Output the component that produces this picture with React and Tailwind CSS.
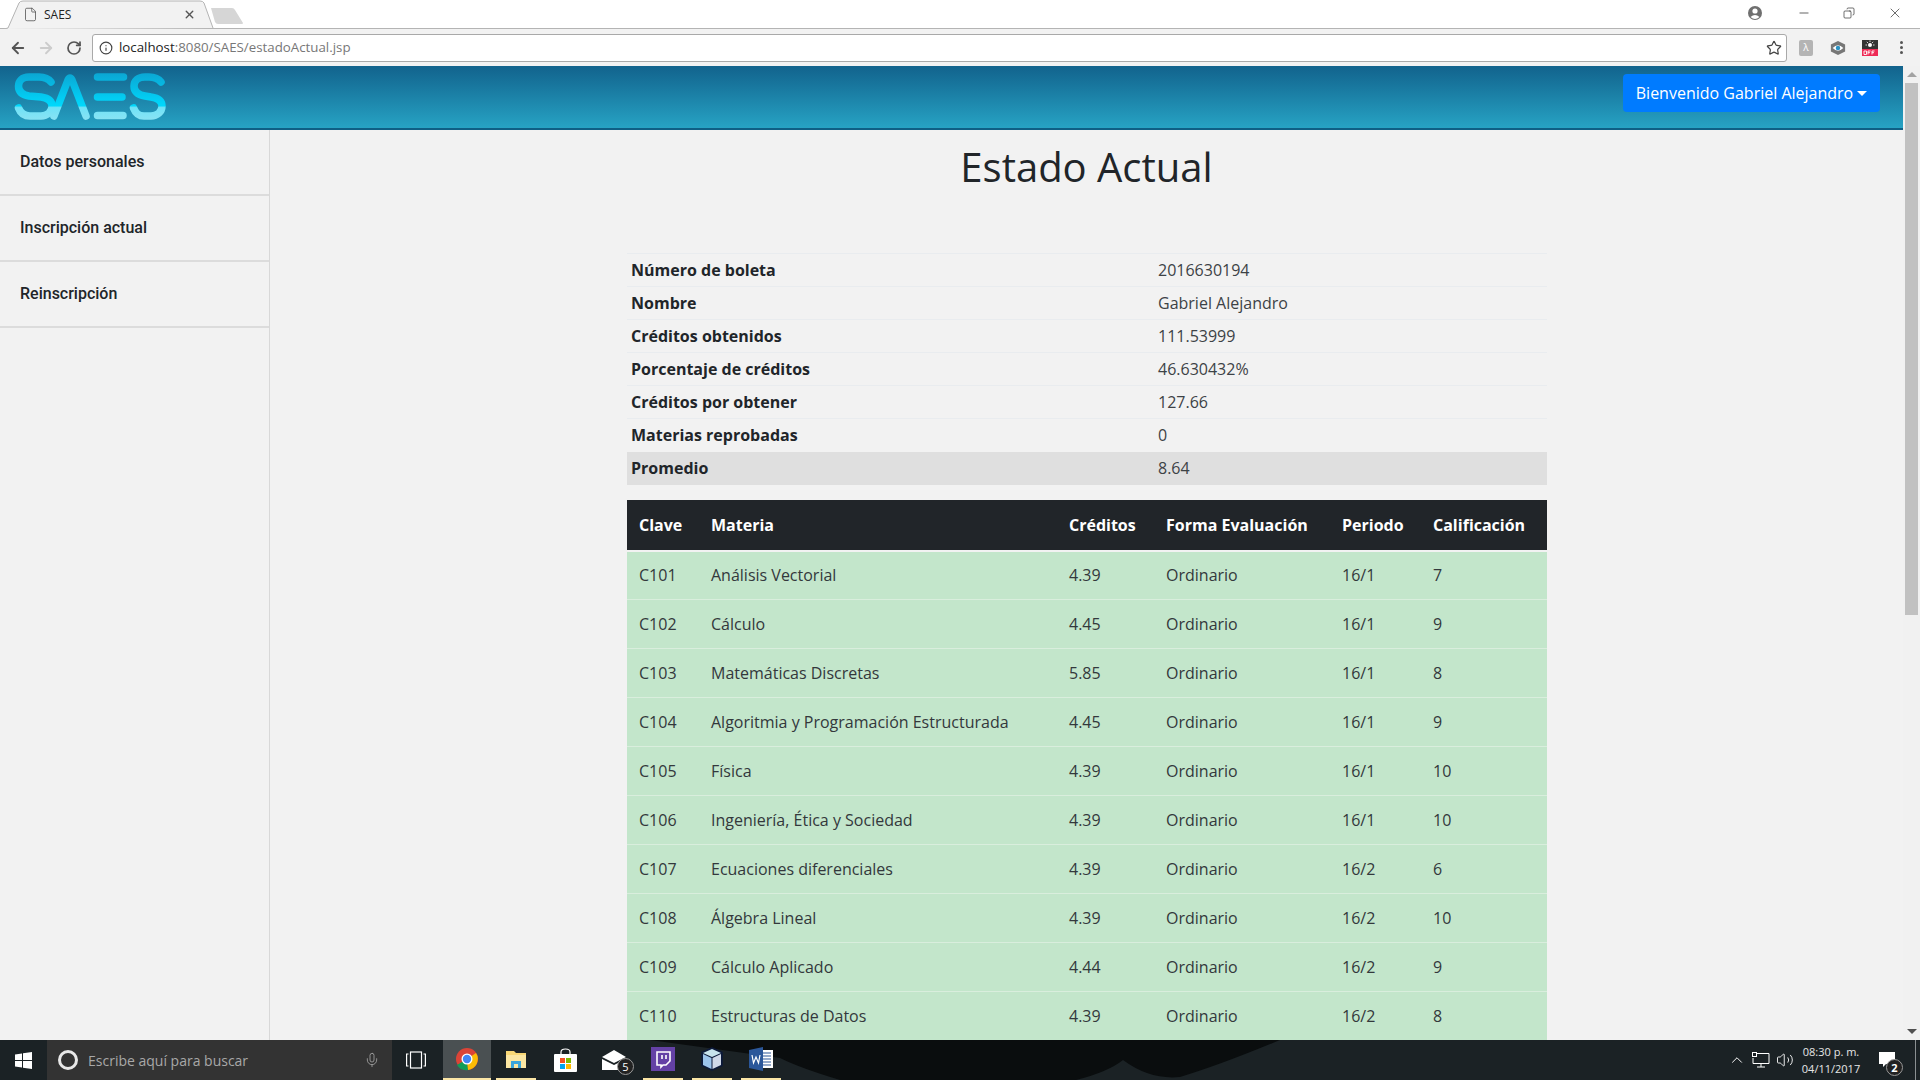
import { ArrowLeft, ArrowRight, RotateCw, Info, Star, X, Minus, Mic, ChevronUp, File, Copy, Volume2 } from 'lucide-react'

const info = [
  ['Número de boleta', '2016630194'],
  ['Nombre', 'Gabriel Alejandro'],
  ['Créditos obtenidos', '111.53999'],
  ['Porcentaje de créditos', '46.630432%'],
  ['Créditos por obtener', '127.66'],
  ['Materias reprobadas', '0'],
  ['Promedio', '8.64'],
]

const materias = [
  ['C101', 'Análisis Vectorial', '4.39', 'Ordinario', '16/1', '7'],
  ['C102', 'Cálculo', '4.45', 'Ordinario', '16/1', '9'],
  ['C103', 'Matemáticas Discretas', '5.85', 'Ordinario', '16/1', '8'],
  ['C104', 'Algoritmia y Programación Estructurada', '4.45', 'Ordinario', '16/1', '9'],
  ['C105', 'Física', '4.39', 'Ordinario', '16/1', '10'],
  ['C106', 'Ingeniería, Ética y Sociedad', '4.39', 'Ordinario', '16/1', '10'],
  ['C107', 'Ecuaciones diferenciales', '4.39', 'Ordinario', '16/2', '6'],
  ['C108', 'Álgebra Lineal', '4.39', 'Ordinario', '16/2', '10'],
  ['C109', 'Cálculo Aplicado', '4.44', 'Ordinario', '16/2', '9'],
  ['C110', 'Estructuras de Datos', '4.39', 'Ordinario', '16/2', '8'],
]

function Logo() {
  return (
    <svg width="170" height="52" viewBox="0 0 170 52" fill="none" strokeLinecap="round" strokeLinejoin="round">
      <defs>
        <linearGradient id="saes" gradientUnits="userSpaceOnUse" x1="0" y1="2" x2="0" y2="50">
          <stop offset="0" stopColor="#0ba6d3" />
          <stop offset="0.68" stopColor="#00d8fc" />
          <stop offset="0.72" stopColor="#6fe2f7" />
          <stop offset="1" stopColor="#8ce3f3" />
        </linearGradient>
      </defs>
      <g stroke="url(#saes)" strokeWidth="7.5">
        <path d="M51 11 C48 7 44 6 39 6 H29 C22 6 18.5 10 18.5 15 C18.5 21 23 24 29 25 L41 26 C48 27 52 30 52 35 C52 41 47 45 41 45 H30 C24 45 20.5 42 18.5 37" />
        <path d="M54 45 L68 9 Q70 5 72 9 L86 45" />
        <path d="M97.5 6 H123.5 M97.5 26 H122 M97.5 44.5 H123" />
        <path d="M161 11 C158 7 154 6 149 6 H145 C138 6 134 10 134 15 C134 21 139 24 145 25 L151 26 C158 27 162 30 162 35 C162 41 157 45 151 45 H144 C138 45 135.5 42 133.5 37" />
      </g>
    </svg>
  )
}

function BrowserChrome() {
  return (
    <div className="shrink-0 font-['Open_Sans',sans-serif]">
      <div className="h-[29px] bg-white border-b border-[#b4b4b4] flex items-start relative">
        <svg className="absolute left-[4px] top-0" width="210" height="29" viewBox="0 0 210 29">
          <path d="M0 29 L4 28 L15 3 Q16 1 19 1 H196 Q199 1 200 3 L209 28" fill="#f2f2f2" stroke="#b4b4b4" />
        </svg>
        <svg className="absolute left-[210px] top-[7px]" width="34" height="18" viewBox="0 0 34 18">
          <path d="M1 1 H22 Q24 1 25 3 L33 16 Q33 17 32 17 H8 Q6 17 5 15 Z" fill="#d6d6d6" />
        </svg>
        <div className="relative flex items-center h-[29px] w-[210px] pl-[23px]">
          <File size={15} strokeWidth={1.3} className="text-[#555] shrink-0" />
          <span className="ml-[6px] text-[12px] text-[#222]">SAES</span>
          <X size={13} strokeWidth={2.6} className="ml-auto mr-[14px] text-[#555]" />
        </div>
        <div className="flex-1" />
        <div className="relative flex items-center h-[26px] text-[#222]">
          <svg width="16" height="16" viewBox="0 0 16 16" className="mr-[34px]">
            <circle cx="8" cy="8" r="7" fill="#6f6f6f" />
            <circle cx="8" cy="6" r="2.6" fill="#fff" />
            <path d="M3.5 12 Q8 8 12.5 12 Q8 16 3.5 12" fill="#fff" />
          </svg>
          <Minus size={14} strokeWidth={1.2} className="mr-[32px]" />
          <Copy size={12} strokeWidth={1.3} className="mr-[32px] -scale-x-100" />
          <X size={16} strokeWidth={1} className="mr-[17px]" />
        </div>
      </div>
      <div className="h-[37px] bg-[#f2f2f2] flex items-center">
        <ArrowLeft size={18} strokeWidth={2.4} className="ml-[9px] text-[#555]" />
        <ArrowRight size={18} strokeWidth={2.4} className="ml-[10px] text-[#ccc]" />
        <RotateCw size={16} strokeWidth={2.6} className="ml-[11px] text-[#555]" />
        <div className="ml-[10px] flex-1 h-[28px] bg-white border border-[#a9a9a9] rounded-[3px] flex items-center pl-[6px] pr-[4px]">
          <Info size={14} strokeWidth={2} className="text-[#444]" />
          <span className="ml-[6px] text-[13.3px] text-[#222]">localhost</span>
          <span className="text-[13.3px] text-[#777]">:8080/SAES/estadoActual.jsp</span>
          <Star size={16} strokeWidth={1.8} className="ml-auto text-[#444]" />
        </div>
        <div className="ml-[12px] w-[14px] h-[16px] bg-[#b4b4b4] rounded-[2px] flex items-center justify-center text-[10px] text-white">λ</div>
        <svg width="16" height="16" viewBox="0 0 18 18" className="ml-[17px]">
          <path d="M9 1 L17 5 V13 L9 17 L1 13 V5 Z" fill="#777" />
          <path d="M3 9 Q9 3 15 9 Q9 15 3 9" fill="#fff" />
          <circle cx="9" cy="9" r="2.5" fill="#2b93c4" />
        </svg>
        <svg width="16" height="16" viewBox="0 0 16 16" className="ml-[16px]">
          <rect width="16" height="9" fill="#333" />
          <circle cx="8" cy="5" r="2" fill="#fff" />
          <path d="M8 0.5 V2 M3.5 5 H5 M11 5 H12.5 M4.8 1.8 L6 3 M11.2 1.8 L10 3" stroke="#fff" strokeWidth="0.8" />
          <rect y="9" width="16" height="7" fill="#ee2a55" />
          <path d="M2 11 H4.5 V14.5 H2 Z M6 14.5 V11 H8.5 M6 12.7 H8 M10 14.5 V11 H12.5 M10 12.7 H12" fill="none" stroke="#fff" strokeWidth="0.9" />
        </svg>
        <div className="ml-[22px] mr-[17px] flex flex-col gap-[2px]">
          <div className="w-[3px] h-[3px] bg-[#555] rounded-full" />
          <div className="w-[3px] h-[3px] bg-[#555] rounded-full" />
          <div className="w-[3px] h-[3px] bg-[#555] rounded-full" />
        </div>
      </div>
    </div>
  )
}

function Taskbar() {
  return (
    <div className="shrink-0 h-[40px] bg-[#1b2225] flex items-center text-white font-['Open_Sans',sans-serif] relative">
      <svg className="absolute left-0 top-0" width="1920" height="40" viewBox="0 0 1920 40">
        <path d="M650 0 L780 18 Q800 28 840 40 H1076 Q1108 32 1123 20 Q1150 40 1180 37 Q1220 25 1280 0 Z" fill="#0a0d0e" />
      </svg>
      <div className="relative w-[47px] flex justify-center">
        <svg width="17" height="17" viewBox="0 0 17 17" fill="#fff">
          <path d="M0 2.5 L7 1.5 V8 H0 Z M8 1.3 L17 0 V8 H8 Z M0 9 H7 V15.5 L0 14.5 Z M8 9 H17 V17 L8 15.7 Z" />
        </svg>
      </div>
      <div className="relative w-[345px] h-full bg-[#333333] flex items-center pl-[11px]">
        <div className="w-[20px] h-[20px] rounded-full border-[3px] border-[#e8e8e8]" />
        <span className="ml-[10px] text-[14px] text-[#a8a8a8]">Escribe aquí para buscar</span>
        <Mic size={16} strokeWidth={1.2} className="ml-auto mr-[12px] text-[#aaa]" />
      </div>
      <div className="relative w-[48px] flex justify-center">
        <svg width="20" height="18" viewBox="0 0 20 18" fill="none" stroke="#fff" strokeWidth="1.2">
          <rect x="4.5" y="1" width="11" height="16" />
          <path d="M2.5 3 H0.6 V15 H2.5 M17.5 3 H19.4 V15 H17.5" />
        </svg>
      </div>
      <div className="relative ml-[3px] w-[48px] h-full bg-[#4a5052] flex items-center justify-center border-b-[2px] border-[#fbe6a6]">
        <svg width="24" height="24" viewBox="0 0 24 24">
          <circle cx="12" cy="12" r="11" fill="#db4437" />
          <path d="M12 12 L2 18 A11 11 0 0 0 13 23 Z" fill="#0f9d58" />
          <path d="M12 12 L21 6 A11 11 0 0 1 13 23 Z" fill="#fbbc05" />
          <circle cx="12" cy="12" r="5.5" fill="#fff" />
          <circle cx="12" cy="12" r="4.2" fill="#4285f4" />
        </svg>
      </div>
      <div className="relative ml-[5px] flex gap-[9px] h-full">
        <div className="w-[40px] h-full flex items-center justify-center border-b-[2px] border-[#fbe6a6]">
          <svg width="22" height="22" viewBox="0 0 22 22">
            <path d="M1 3 H9 L11 5 H21 V20 H1 Z" fill="#f8d775" />
            <path d="M1 7 H21 V20 H1 Z" fill="#fbe6a2" />
            <path d="M6 20 V13 H16 V20 H13 V16 H9 V20 Z" fill="#3aa5dc" />
          </svg>
        </div>
        <div className="w-[40px] h-full flex items-center justify-center">
          <svg width="23" height="24" viewBox="0 0 23 24">
            <path d="M7 7 V4 Q7 1 11.5 1 Q16 1 16 4 V7" fill="none" stroke="#fff" strokeWidth="1.2" />
            <rect x="0" y="6" width="23" height="18" rx="1" fill="#fff" />
            <rect x="6" y="10" width="5" height="5" fill="#f25022" />
            <rect x="12" y="10" width="5" height="5" fill="#7fba00" />
            <rect x="6" y="16" width="5" height="5" fill="#00a4ef" />
            <rect x="12" y="16" width="5" height="5" fill="#ffb900" />
          </svg>
        </div>
        <div className="w-[40px] h-full flex items-center justify-center relative">
          <svg width="24" height="20" viewBox="0 0 24 20">
            <path d="M0 7 L12 0 L24 7 L12 13 Z" fill="#fff" />
            <path d="M0 9 L12 15 L24 9 V20 H0 Z" fill="#fff" />
          </svg>
          <div className="absolute left-[23px] top-[18px] w-[17px] h-[17px] rounded-full bg-[#222] border border-[#999] text-[11px] leading-[15px] text-center">5</div>
        </div>
        <div className="w-[40px] h-full flex items-center justify-center border-b-[2px] border-[#fbe6a6]">
          <svg width="24" height="24" viewBox="0 0 24 24">
            <rect width="24" height="24" fill="#6441a5" />
            <path d="M6 5 H19 V14 L15 18 H12 L10 20 V18 H6 Z" fill="none" stroke="#fff" strokeWidth="1.6" />
            <path d="M11 8 V12 M15 8 V12" stroke="#fff" strokeWidth="1.6" />
          </svg>
        </div>
        <div className="w-[40px] h-full flex items-center justify-center border-b-[2px] border-[#fbe6a6]">
          <svg width="22" height="24" viewBox="0 0 22 24">
            <path d="M11 1 L21 5.5 V18.5 L11 23 L1 18.5 V5.5 Z" fill="#0d1a3a" stroke="#0d1a3a" strokeWidth="1.5" strokeLinejoin="round" />
            <path d="M11 2 L20 6 L11 10 L2 6 Z" fill="#c7e3ec" />
            <path d="M2 7 L10.5 11 V22 L2 18 Z" fill="#9cc4ec" />
            <path d="M20 7 L11.5 11 V22 L20 18 Z" fill="#cfd8e8" />
          </svg>
        </div>
        <div className="w-[40px] h-full flex items-center justify-center border-b-[2px] border-[#fbe6a6]">
          <svg width="24" height="24" viewBox="0 0 24 24">
            <rect x="9" y="3" width="15" height="18" fill="#fff" />
            <path d="M14 6 H22 M14 9 H22 M14 12 H22 M14 15 H22 M14 18 H22" stroke="#2b579a" strokeWidth="1.2" />
            <path d="M0 3 L14 0 V24 L0 21 Z" fill="#2b579a" />
            <path d="M3 8 L4.5 16 L7 10 L9.5 16 L11 8" fill="none" stroke="#fff" strokeWidth="1.2" />
          </svg>
        </div>
      </div>
      <div className="flex-1" />
      <ChevronUp size={18} strokeWidth={1.3} className="relative" />
      <svg width="18" height="16" viewBox="0 0 18 16" fill="none" stroke="#fff" strokeWidth="1" className="relative ml-[6px]">
        <path d="M4.5 1.5 H17 V11.5 H1 V6 M9 11.5 V15 M5 15 H13" />
        <rect x="0.5" y="0.5" width="4" height="4" />
      </svg>
      <Volume2 size={18} strokeWidth={1.2} className="relative ml-[6px]" />
      <div className="relative ml-[2px] w-[70px] text-[11px] leading-[17px] text-[#e6e6e6] text-center">
        <div>08:30 p. m.</div>
        <div>04/11/2017</div>
      </div>
      <div className="relative ml-[13px] mr-[12px] w-[24px] h-[24px]">
        <svg width="16" height="16" viewBox="0 0 16 16" className="absolute left-0 top-[4px]">
          <path d="M0 0 H16 V12 H7 L4 15 V12 H0 Z" fill="#fff" />
        </svg>
        <div className="absolute left-[7px] top-[11px] w-[17px] h-[17px] rounded-full bg-[#222] border border-[#999] text-[11px] leading-[15px] text-center font-bold">2</div>
      </div>
      <div className="relative w-[1px] h-full bg-[#8a8f91] mr-[4px]" />
    </div>
  )
}

export default function App() {
  return (
    <div className="h-screen w-full flex flex-col overflow-hidden bg-[#f2f2f2] font-['Open_Sans',sans-serif] text-[#212529]">
      <BrowserChrome />
      <div className="flex-1 min-h-0 flex">
        <div className="flex-1 min-w-0 flex flex-col">
          <div className="shrink-0 h-[64px] bg-gradient-to-b from-[#12638d] to-[#27a3c4] border-b-[2px] border-[#0f5f85] flex items-start justify-between pr-[23px]">
            <div className="pt-[5px] h-[62px] overflow-hidden"><Logo /></div>
            <button className="mt-[8px] h-[38px] w-[257px] bg-[#007bff] rounded-[4px] text-white text-[16px] flex items-center justify-center gap-[4px]">
              Bienvenido Gabriel Alejandro
              <span className="w-0 h-0 border-x-[5px] border-x-transparent border-t-[5px] border-t-white" />
            </button>
          </div>
          <div className="flex-1 min-h-0 flex">
            <aside className="w-[270px] shrink-0 border-r border-[#d8d8d8] font-['Roboto',sans-serif] font-medium text-[16px] text-[#212529]">
              {['Datos personales', 'Inscripción actual', 'Reinscripción'].map((item) => (
                <div key={item} className="h-[66px] flex items-center pl-[20px] border-b-[2px] border-[#dcdcdc]">{item}</div>
              ))}
            </aside>
            <main className="flex-1 min-w-0 overflow-hidden">
              <h1 className="text-[40px] leading-[48px] text-center mt-[13px] text-[#212529]">Estado Actual</h1>
              <div className="w-[920px] mt-[62px] ml-[357px]">
                <table className="w-full table-fixed text-[16px] leading-[24px]">
                  <colgroup>
                    <col className="w-[528px]" />
                    <col />
                  </colgroup>
                  <tbody>
                    {info.map(([k, v], i) => (
                      <tr key={k} className={i === 6 ? 'bg-[#dfdfdf]' : ''}>
                        <td className={`h-[33px] px-[4px] font-bold ${i === 6 ? '' : 'border-t border-[#e9ecef]'}`}>{k}</td>
                        <td className={`h-[33px] px-[3px] text-[#3d4246] ${i === 6 ? '' : 'border-t border-[#e9ecef]'}`}>{v}</td>
                      </tr>
                    ))}
                  </tbody>
                </table>
                <table className="w-full table-fixed mt-[15px] text-[16px] leading-[24px]">
                  <colgroup>
                    <col className="w-[72px]" />
                    <col className="w-[358px]" />
                    <col className="w-[97px]" />
                    <col className="w-[176px]" />
                    <col className="w-[91px]" />
                    <col />
                  </colgroup>
                  <thead>
                    <tr className="bg-[#212529] text-white font-bold border-b-[2px] border-[#f2f2f2]">
                      {['Clave', 'Materia', 'Créditos', 'Forma Evaluación', 'Periodo', 'Calificación'].map((h) => (
                        <th key={h} className="h-[51px] px-[12px] text-left whitespace-nowrap">{h}</th>
                      ))}
                    </tr>
                  </thead>
                  <tbody>
                    {materias.map((row) => (
                      <tr key={row[0]} className="bg-[#c3e6cb] border-b border-[#d9eedd]">
                        {row.map((c, i) => (
                          <td key={i} className="h-[49px] px-[12px] whitespace-nowrap text-[#33383c]">{c}</td>
                        ))}
                      </tr>
                    ))}
                  </tbody>
                </table>
              </div>
            </main>
          </div>
        </div>
        <div className="w-[17px] shrink-0 bg-[#f1f1f1] flex flex-col items-center">
          <div className="mt-[6px] w-0 h-0 border-x-[5px] border-x-transparent border-b-[5px] border-b-[#a3a3a3]" />
          <div className="mt-[6px] w-[13px] h-[532px] bg-[#c1c1c1]" />
          <div className="mt-auto mb-[6px] w-0 h-0 border-x-[5px] border-x-transparent border-t-[5px] border-t-[#505050]" />
        </div>
      </div>
      <Taskbar />
    </div>
  )
}
